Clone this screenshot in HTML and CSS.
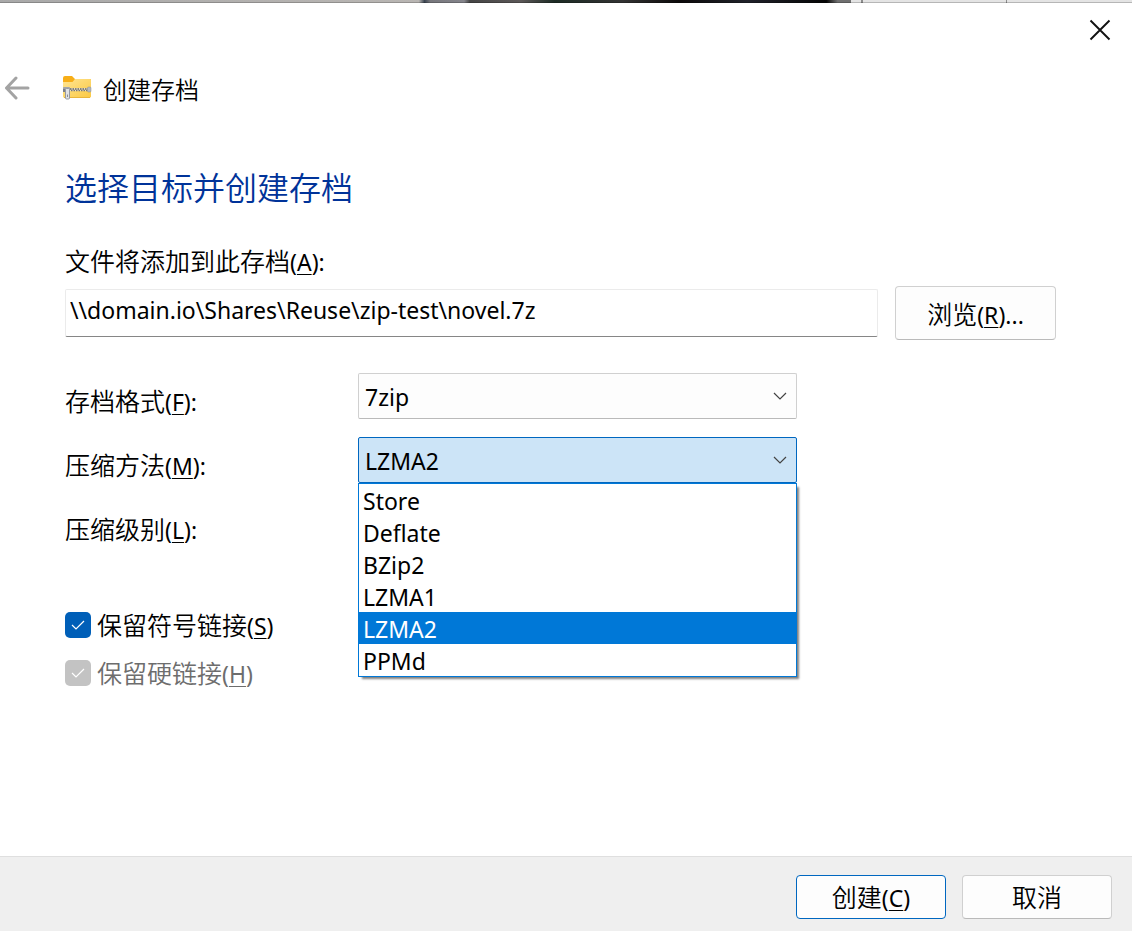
FILE: index.html
```html
<!DOCTYPE html>
<html lang="zh-CN">
<head>
    <meta charset="UTF-8">
    <meta name="viewport" content="width=device-width, initial-scale=1.0">
    <title>创建存档</title>
    <link rel="stylesheet" href="styles.css">
</head>
<body>
    <div class="backdrop"></div>

    <div class="titlebar">
        <button type="button" class="icon-button" aria-label="关闭">
            <svg width="22" height="22" viewBox="0 0 22 22"><path d="M1.5 1.5 20.5 20.5M20.5 1.5 1.5 20.5" fill="none" stroke="#111" stroke-width="1.9"/></svg>
        </button>
    </div>

    <header class="header">
        <button type="button" class="icon-button" aria-label="返回">
            <svg width="26" height="24" viewBox="0 0 26 24"><path d="M12 2 2.500 12 12 22M2.500 12H24" fill="none" stroke="#a3a3a3" stroke-width="3" stroke-linecap="round" stroke-linejoin="round"/></svg>
        </button>
        <svg class="folder" width="30" height="26" viewBox="0 0 30 26">
            <defs>
                <linearGradient id="front" x1="0" y1="0" x2="1" y2="1">
                    <stop offset="0" stop-color="#ffe593"/>
                    <stop offset="1" stop-color="#fbc944"/>
                </linearGradient>
            </defs>
            <path d="M1 3Q1 1 3 1H10l3 3H28q1 0 1 1v8H1z" fill="#f7ae18"/>
            <path d="M1 7H10.500L13 4H28q1 0 1 1V21.500q0 1-1 1H2q-1 0-1-1z" fill="url(#front)"/>
            <path d="M2 22.500H28" stroke="#e9b53c" stroke-width="1"/>
            <path d="M8 14.500H26" stroke="#e9dfc0" stroke-width="3"/>
            <path d="M8 14H26" stroke="#666" stroke-width="1.500" stroke-dasharray="1.500 1"/>
            <path d="M9 15.500H26" stroke="#777" stroke-width="1.500" stroke-dasharray="1.500 1"/>
            <rect x="25.500" y="12" width="3.500" height="5" rx="1" fill="#b4b8be" stroke="#888c92" stroke-width=".5"/>
            <path d="M1 13q0-1 1-1H7q1 0 1 1v4H1z" fill="#a2a5aa"/>
            <path d="M1 14h2.500v3H1z" fill="#7d8086"/>
            <rect x="3.500" y="13.500" width="4" height="10.500" rx="1" fill="#e0e2e5" stroke="#979aa0" stroke-width="1"/>
            <path d="M5.500 19.500v2.500" stroke="#8a8d92" stroke-width="1"/>
        </svg>
        <span class="title">创建存档</span>
    </header>

    <main>
        <h1>选择目标并创建存档</h1>

        <label class="path-label" for="path">文件将添加到此存档<span class="key">(<u>A</u>):</span></label>
        <div class="path-row">
            <input id="path" type="text" value="\\domain.io\Shares\Reuse\zip-test\novel.7z" spellcheck="false">
            <button type="button" class="button browse">浏览<span class="key">(<u>R</u>)...</span></button>
        </div>

        <div class="options">
            <label for="format">存档格式<span class="key">(<u>F</u>):</span></label>
            <select id="format">
                <option>7zip</option>
            </select>

            <label for="method">压缩方法<span class="key">(<u>M</u>):</span></label>
            <div class="dropdown">
                <select id="method" class="open">
                    <option>Store</option>
                    <option>Deflate</option>
                    <option>BZip2</option>
                    <option>LZMA1</option>
                    <option selected>LZMA2</option>
                    <option>PPMd</option>
                </select>
                <ul class="list" role="listbox" aria-label="压缩方法">
                    <li role="option">Store</li>
                    <li role="option">Deflate</li>
                    <li role="option">BZip2</li>
                    <li role="option">LZMA1</li>
                    <li role="option" class="selected" aria-selected="true">LZMA2</li>
                    <li role="option">PPMd</li>
                </ul>
            </div>

            <label for="level">压缩级别<span class="key">(<u>L</u>):</span></label>
            <select id="level"></select>
        </div>

        <div class="checks">
            <label><input type="checkbox" checked><span>保留符号链接<span class="key">(<u>S</u>)</span></span></label>
            <label class="disabled"><input type="checkbox" checked disabled><span>保留硬链接<span class="key">(<u>H</u>)</span></span></label>
        </div>
    </main>

    <footer>
        <button type="button" class="button primary">创建<span class="key">(<u>C</u>)</span></button>
        <button type="button" class="button">取消</button>
    </footer>
</body>
</html>
```
FILE: styles.css
```css
*{margin: 0; padding: 0; box-sizing: border-box;}
body{min-height: 100vh; display: flex; flex-direction: column; background-color: #fff; color: #000; font-family: "Noto Sans", "Noto Sans CJK SC", sans-serif; font-size: 25px; font-weight: 350; line-height: 32px;}
button, input, select{font: inherit; color: inherit;}
u{text-decoration-thickness: 1px; text-underline-offset: 3px;}
.key, .list, select, .path-row input{font-size: 23px; font-weight: 400;}

/* sliver of the window behind the dialog */
.backdrop{height: 3px; border-bottom: 1px solid rgba(0, 0, 0, 0.2); background: linear-gradient(90deg, #a9a9a9 0, #b9b6b3 37%, #3a4450 37.5%, #77777c 38%, #85858c 41%, #454545 41.500%, #5c5858 46%, #1d2b25 49%, #333 55%, #0c0a0a 60%, #20222a 66%, #050505 73%, #707070 74%, #707070 75.2%, #e4e4e4 75.2%, #e4e4e4 76.1%, #8c8c8c 76.1%, #8c8c8c 76.2%, #e4e4e4 76.2%, #e4e4e4 88.9%, #8c8c8c 88.9%, #8c8c8c 89%, #e4e4e4 89%);}

.titlebar{height: 54px; display: flex; justify-content: flex-end; align-items: center; padding: 0 21px;}
.icon-button{display: flex; border: none; background: none;}
.header{height: 62px; display: flex; align-items: center; padding: 0 4px;}
.folder{margin: 0 11px 0 32px;}
.title{padding-top: 3px; font-size: 24px;}

main{flex: 1; padding: 49px 76px 32px 65px;}
h1{font-size: 32px; font-weight: 350; line-height: 40px; color: #003399;}
.path-label{display: block; margin-top: 37px;}
.path-row{display: flex; align-items: center; gap: 17px; margin-top: 8px;}
.path-row input{flex: 1; min-width: 0; height: 48px; padding: 0 4px 6px; border: 1px solid #ebebeb; border-bottom-color: #868686; border-radius: 2px; background-color: #fff; outline: none;}
.button{width: 150px; height: 44px; border: 1px solid #d0d0d0; border-bottom-color: #bababa; border-radius: 4px; background-color: #fdfdfd;}
.browse{width: 161px; height: 54px; padding-top: 2px;}

.options{display: grid; grid-template-columns: 293px 439px; grid-auto-rows: 46px; row-gap: 18px; margin-top: 33px;}
.options label{padding-top: 12px;}
select{appearance: none; width: 100%; height: 46px; padding: 2px 6px 0; border: 1px solid #d0d0d0; border-bottom-color: #bababa; border-radius: 2px; background: #fdfdfd url("data:image/svg+xml,%3Csvg xmlns='http://www.w3.org/2000/svg' width='14' height='8'%3E%3Cpath d='M1 1l6 6 6-6' fill='none' stroke='%23444' stroke-width='1.2'/%3E%3C/svg%3E") no-repeat right 9px center;}
select.open{border-color: #0067c0; background-color: #cce4f7;}
.dropdown{position: relative;}
.list{position: absolute; top: 100%; left: 0; right: 0; border: 1px solid #0078d7; background-color: #fff; box-shadow: 3px 3px 2px -1px rgba(0, 0, 0, 0.5); list-style: none;}
.list li{height: 32px; padding: 1px 4px 0;}
.list .selected{background-color: #0078d7; color: #fff;}

.checks{margin-top: 54px;}
.checks label{height: 48px; display: flex; align-items: center; gap: 6px;}
.checks input{appearance: none; width: 26px; height: 26px; border-radius: 5px; background: #005fb8 url("data:image/svg+xml,%3Csvg xmlns='http://www.w3.org/2000/svg' width='14' height='10'%3E%3Cpath d='M1 5l4 4 8-8' fill='none' stroke='%23fff' stroke-width='1.2'/%3E%3C/svg%3E") no-repeat center;}
.checks input:disabled{background-color: #c3c3c3;}
.disabled{color: #6d6d6d;}

footer{display: flex; justify-content: flex-end; gap: 16px; padding: 18px 20px 12px; border-top: 1px solid #dfdfdf; background-color: #efefef;}
.primary{border-color: #0067c0;}
```
